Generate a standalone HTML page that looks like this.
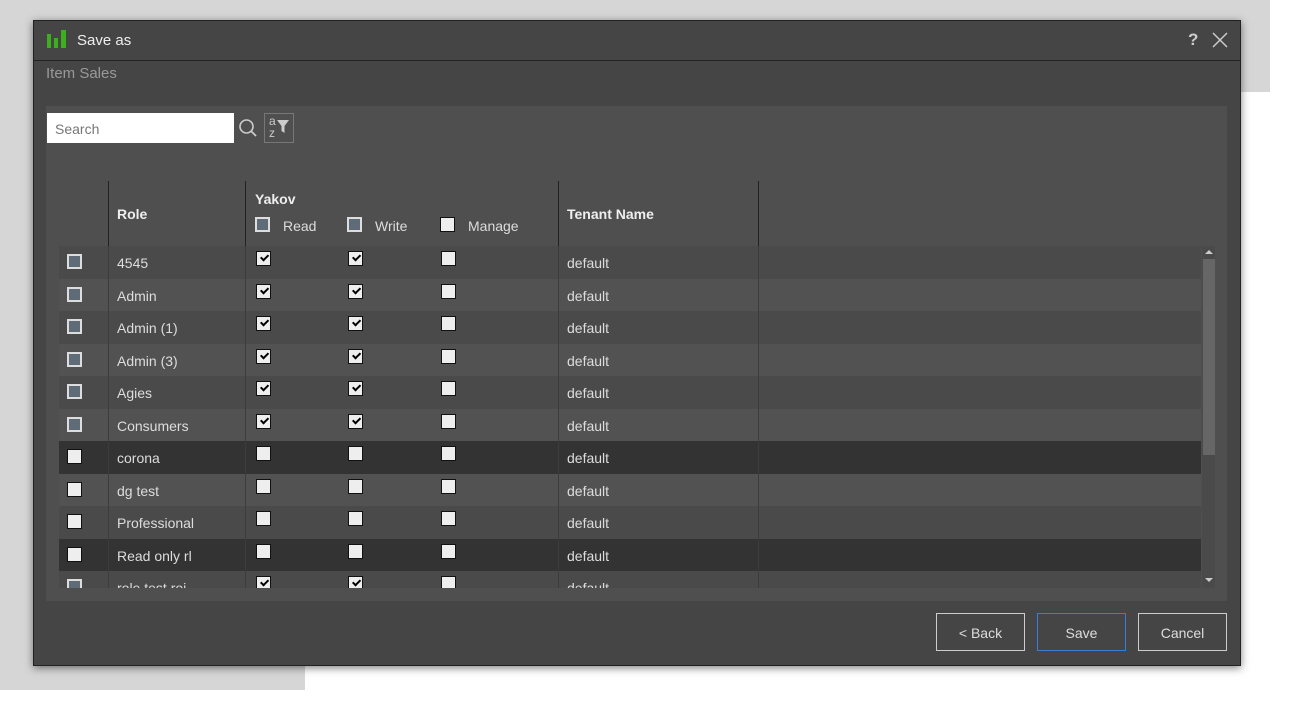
<!DOCTYPE html>
<html><head><style>
body{margin:0;width:1299px;height:723px;background:#fff;position:relative;overflow:hidden;font-family:"Liberation Sans",sans-serif;}
.a{position:absolute;}
.t{color:#ddd;font-size:14px;}
.cb{position:absolute;border:1px solid #111;background:#eee;box-sizing:border-box;width:15px;height:15px;}
.cb.k::after{content:"";position:absolute;width:6px;height:3px;border-left:2px solid #000;border-bottom:2px solid #000;transform:rotate(-45deg);transform-origin:left top;top:6px;left:3px}
.pc{position:absolute;width:15px;height:15px;border:2px solid #ddd;background:#5f6b77;box-sizing:border-box;}
.pc.w{background:#eee;border:1px solid #111;}
.btn{position:absolute;top:613px;height:38px;border:1px solid #ccc;color:#ddd;font-size:14px;text-align:center;line-height:38px;box-sizing:border-box}
</style></head><body>
<div class="a" style="left:0;top:0;width:1270px;height:92px;background:#d6d6d6"></div>
<div class="a" style="left:0;top:0;width:305px;height:690px;background:#d6d6d6"></div>
<div class="a" style="left:0;top:692px;width:1299px;height:31px;background:#fff"></div>
<div class="a" style="left:33px;top:20px;width:1208px;height:646px;background:#454545;border:1px solid #222;box-sizing:border-box;box-shadow:0 2px 8px rgba(0,0,0,.5)"></div>
<div class="a" style="left:34px;top:60px;width:1206px;height:1px;background:#222"></div>
<div class="a" style="left:47px;top:34px;width:4px;height:14px;background:#3cb01a"></div>
<div class="a" style="left:54px;top:38px;width:4px;height:10px;background:#3cb01a"></div>
<div class="a" style="left:61px;top:30px;width:5px;height:18px;background:#3cb01a"></div>
<div class="a" style="left:77px;top:32px;color:#eee;font-size:15px">Save as</div>
<div class="a" style="left:1188px;top:30px;color:#ccc;font-size:17px;font-weight:bold">?</div>
<svg class="a" style="left:1212px;top:32px" width="16" height="16"><path d="M1 1L15 15M15 1L1 15" stroke="#ccc" stroke-width="1.5"/></svg>
<div class="a" style="left:46px;top:65px;color:#999;font-size:15px">Item Sales</div>
<div class="a" style="left:46px;top:106px;width:1181px;height:495px;background:#4f4f4f"></div>
<div class="a" style="left:47px;top:113px;width:187px;height:30px;background:#fff"></div>
<div class="a" style="left:55px;top:121px;color:#777;font-size:14px">Search</div>
<svg class="a" style="left:238px;top:118px" width="20" height="20"><circle cx="8.5" cy="8.5" r="6.5" stroke="#ccc" stroke-width="1.6" fill="none"/><path d="M13 13L18 18" stroke="#ccc" stroke-width="1.8"/></svg>
<div class="a" style="left:264px;top:113px;width:30px;height:30px;border:1px solid #777;box-sizing:border-box"></div>
<div class="a" style="left:269px;top:115px;color:#ccc;font-size:12px;line-height:12px">a<br>z</div>
<svg class="a" style="left:277px;top:120px" width="12" height="14"><path d="M0 0H12L7.5 6V13L4.5 11V6Z" fill="#ccc"/></svg>
<div class="a" style="left:108px;top:181px;width:1px;height:65px;background:#222"></div>
<div class="a" style="left:245px;top:181px;width:1px;height:65px;background:#222"></div>
<div class="a" style="left:558px;top:181px;width:1px;height:65px;background:#222"></div>
<div class="a" style="left:758px;top:181px;width:1px;height:65px;background:#222"></div>
<div class="a" style="left:117px;top:206px;color:#eee;font-size:14px;font-weight:bold">Role</div>
<div class="a" style="left:255px;top:191px;color:#eee;font-size:14px;font-weight:bold">Yakov</div>
<div class="pc" style="left:255px;top:217px"></div><div class="a t" style="left:283px;top:218px">Read</div>
<div class="pc" style="left:347px;top:217px"></div><div class="a t" style="left:375px;top:218px">Write</div>
<div class="pc w" style="left:440px;top:217px"></div><div class="a t" style="left:468px;top:218px">Manage</div>
<div class="a" style="left:567px;top:206px;color:#eee;font-size:14px;font-weight:bold">Tenant Name</div>
<div id="rows" class="a" style="left:59px;top:246px;width:1142px;height:342px;overflow:hidden"></div>
<div class="a" style="left:1202px;top:246px;width:13px;height:342px;background:#4a4a4a"></div>
<div class="a" style="left:1203px;top:259px;width:12px;height:196px;background:#666"></div>
<svg class="a" style="left:1203px;top:248px" width="12" height="8"><path d="M2 6L6 2L10 6Z" fill="#ccc"/></svg>
<svg class="a" style="left:1203px;top:576px" width="12" height="8"><path d="M2 2L6 6L10 2Z" fill="#ccc"/></svg>
<div class="btn" style="left:936px;width:89px">&lt; Back</div>
<div class="btn" style="left:1037px;width:89px;border-color:#3a7bd5">Save</div>
<div class="btn" style="left:1138px;width:89px">Cancel</div>
<script>
var d=[["4545",1,1,1],["Admin",1,1,1],["Admin (1)",1,1,1],["Admin (3)",1,1,1],["Agies",1,1,1],["Consumers",1,1,1],["corona",0,0,0,1],["dg test",0,0,0],["Professional",0,0,0],["Read only rl",0,0,0,1],["role test roi",1,1,1]];
var h="";
d.forEach(function(r,i){var top=i*32.5;var bg=r[4]?"#333":(i%2?"#525252":"#4a4a4a");
h+='<div style="position:absolute;left:0;top:'+top+'px;width:1142px;height:32.5px;background:'+bg+'">'+
'<div style="position:absolute;left:49px;top:0;width:1px;height:33px;background:#3c3c3c"></div><div style="position:absolute;left:186px;top:0;width:1px;height:33px;background:#3c3c3c"></div><div style="position:absolute;left:499px;top:0;width:1px;height:33px;background:#3c3c3c"></div><div style="position:absolute;left:699px;top:0;width:1px;height:33px;background:#3c3c3c"></div>'+
'<div class="pc'+(r[1]?'':' w')+'" style="left:8px;top:8px"></div>'+
'<div style="position:absolute;left:58px;top:9px;color:#ddd;font-size:14px">'+r[0]+'</div>'+
'<div class="cb'+(r[1]?' k':'')+'" style="left:197px;top:5px"></div>'+
'<div class="cb'+(r[2]?' k':'')+'" style="left:289px;top:5px"></div>'+
'<div class="cb" style="left:382px;top:5px"></div>'+
'<div style="position:absolute;left:508px;top:9px;color:#ddd;font-size:14px">default</div></div>';});
document.getElementById("rows").innerHTML=h;
</script>
</body></html>
